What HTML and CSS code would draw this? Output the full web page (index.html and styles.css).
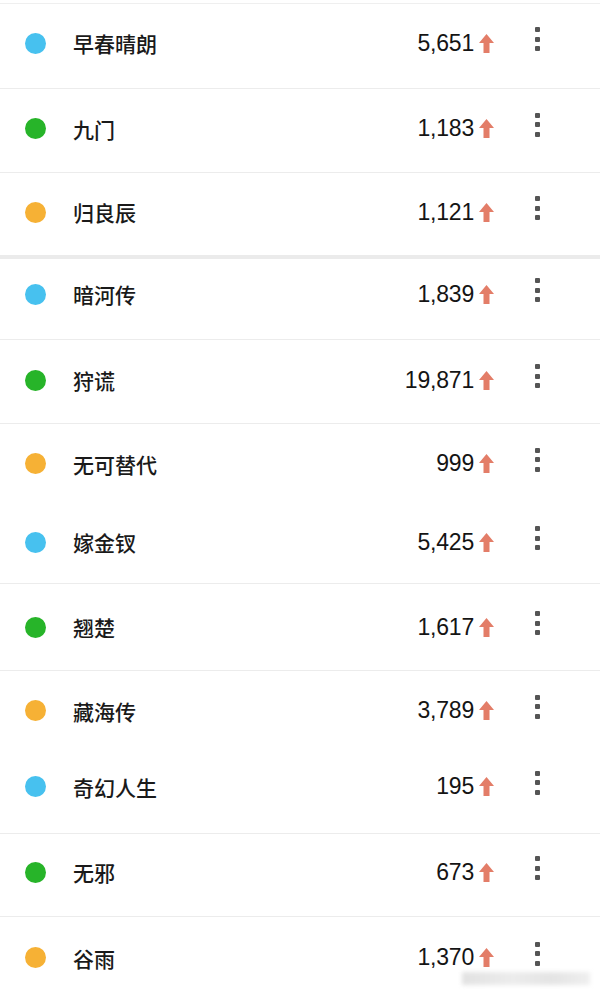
FILE: index.html
```html
<!DOCTYPE html>
<html lang="zh-CN">
<head>
    <meta charset="UTF-8">
    <meta name="viewport" content="width=device-width, initial-scale=1.0">
    <title>热度榜</title>
    <link rel="stylesheet" href="styles.css">
</head>
<body>
    <div class="list">
        <div class="row r1">
            <span class="dot blue"></span>
            <span class="name">早春晴朗</span>
            <span class="value">5,651</span>
            <svg class="arrow" viewBox="0 0 15 19"><polygon points="7.5,0 15,9 10.5,9 10.5,19 4.5,19 4.5,9 0,9"/></svg>
            <span class="more"><i></i><i></i><i></i></span>
        </div>
        <div class="row r2">
            <span class="dot green"></span>
            <span class="name">九门</span>
            <span class="value">1,183</span>
            <svg class="arrow" viewBox="0 0 15 19"><polygon points="7.5,0 15,9 10.5,9 10.5,19 4.5,19 4.5,9 0,9"/></svg>
            <span class="more"><i></i><i></i><i></i></span>
        </div>
        <div class="row r3 thick">
            <span class="dot orange"></span>
            <span class="name">归良辰</span>
            <span class="value">1,121</span>
            <svg class="arrow" viewBox="0 0 15 19"><polygon points="7.5,0 15,9 10.5,9 10.5,19 4.5,19 4.5,9 0,9"/></svg>
            <span class="more"><i></i><i></i><i></i></span>
        </div>
        <div class="row r4">
            <span class="dot blue"></span>
            <span class="name">暗河传</span>
            <span class="value">1,839</span>
            <svg class="arrow" viewBox="0 0 15 19"><polygon points="7.5,0 15,9 10.5,9 10.5,19 4.5,19 4.5,9 0,9"/></svg>
            <span class="more"><i></i><i></i><i></i></span>
        </div>
        <div class="row r5">
            <span class="dot green"></span>
            <span class="name">狩谎</span>
            <span class="value">19,871</span>
            <svg class="arrow" viewBox="0 0 15 19"><polygon points="7.5,0 15,9 10.5,9 10.5,19 4.5,19 4.5,9 0,9"/></svg>
            <span class="more"><i></i><i></i><i></i></span>
        </div>
        <div class="row r6 plain">
            <span class="dot orange"></span>
            <span class="name">无可替代</span>
            <span class="value">999</span>
            <svg class="arrow" viewBox="0 0 15 19"><polygon points="7.5,0 15,9 10.5,9 10.5,19 4.5,19 4.5,9 0,9"/></svg>
            <span class="more"><i></i><i></i><i></i></span>
        </div>
        <div class="row r7">
            <span class="dot blue"></span>
            <span class="name">嫁金钗</span>
            <span class="value">5,425</span>
            <svg class="arrow" viewBox="0 0 15 19"><polygon points="7.5,0 15,9 10.5,9 10.5,19 4.5,19 4.5,9 0,9"/></svg>
            <span class="more"><i></i><i></i><i></i></span>
        </div>
        <div class="row r8">
            <span class="dot green"></span>
            <span class="name">翘楚</span>
            <span class="value">1,617</span>
            <svg class="arrow" viewBox="0 0 15 19"><polygon points="7.5,0 15,9 10.5,9 10.5,19 4.5,19 4.5,9 0,9"/></svg>
            <span class="more"><i></i><i></i><i></i></span>
        </div>
        <div class="row r9 plain">
            <span class="dot orange"></span>
            <span class="name">藏海传</span>
            <span class="value">3,789</span>
            <svg class="arrow" viewBox="0 0 15 19"><polygon points="7.5,0 15,9 10.5,9 10.5,19 4.5,19 4.5,9 0,9"/></svg>
            <span class="more"><i></i><i></i><i></i></span>
        </div>
        <div class="row r10">
            <span class="dot blue"></span>
            <span class="name">奇幻人生</span>
            <span class="value">195</span>
            <svg class="arrow" viewBox="0 0 15 19"><polygon points="7.5,0 15,9 10.5,9 10.5,19 4.5,19 4.5,9 0,9"/></svg>
            <span class="more"><i></i><i></i><i></i></span>
        </div>
        <div class="row r11">
            <span class="dot green"></span>
            <span class="name">无邪</span>
            <span class="value">673</span>
            <svg class="arrow" viewBox="0 0 15 19"><polygon points="7.5,0 15,9 10.5,9 10.5,19 4.5,19 4.5,9 0,9"/></svg>
            <span class="more"><i></i><i></i><i></i></span>
        </div>
        <div class="row r12 plain">
            <span class="dot orange"></span>
            <span class="name">谷雨</span>
            <span class="value">1,370</span>
            <svg class="arrow" viewBox="0 0 15 19"><polygon points="7.5,0 15,9 10.5,9 10.5,19 4.5,19 4.5,9 0,9"/></svg>
            <span class="more"><i></i><i></i><i></i></span>
        </div>
    </div>
    <div class="watermark"></div>
</body>
</html>
```

FILE: styles.css
```css
html, body {
    margin: 0;
    padding: 0;
    background: #fff;
    overflow: hidden;
}
body {
    width: 600px;
    height: 992px;
    position: relative;
    font-family: "Liberation Sans", "Noto Sans CJK SC", sans-serif;
    color: #1e1e1e;
}
.list {
    margin-top: 3px;
    border-top: 1px solid #efefef;
}
.row {
    display: flex;
    align-items: center;
    padding: 0 60px 0 25px;
    border-bottom: 1px solid #ececec;
    box-sizing: content-box;
}
.row.plain {
    border-bottom: none;
}
.row.thick {
    border-bottom: 4px solid #ebebeb;
}
/* the rows were cut from a long screenshot, so heights differ a little */
.r1 { height: 78px; padding-bottom: 6px; }
.r2 { height: 79px; padding-bottom: 4px; }
.r3 { height: 78px; padding-bottom: 4px; }
.r4 { height: 70px; padding-bottom: 10px; }
.r5 { height: 80px; padding-bottom: 3px; }
.r6 { height: 79px; }
.r7 { height: 78px; padding-bottom: 2px; }
.r8 { height: 86px; }
.r9 { height: 79px; }
.r10 { height: 73px; padding-bottom: 10px; }
.r11 { height: 76px; padding-bottom: 6px; }
.r12 { height: 81px; padding-bottom: 2px; }
.dot {
    width: 21px;
    height: 21px;
    border-radius: 50%;
    flex: none;
}
.dot.blue { background: #47c1ef; }
.dot.green { background: #27b429; }
.dot.orange { background: #f6b135; }
.name {
    flex: 1;
    margin-left: 27px;
    font-family: "Noto Sans CJK SC", sans-serif;
    font-size: 21px;
    font-weight: 500;
    color: #1a1a1a;
}
.value {
    font-size: 23px;
    letter-spacing: -0.2px;
    color: #141414;
}
.arrow {
    width: 15px;
    height: 19px;
    margin-left: 5px;
    fill: #e37d68;
    flex: none;
}
.more {
    display: flex;
    flex-direction: column;
    gap: 4.5px;
    margin-left: 41px;
    margin-bottom: 8px;
}
.more i {
    display: block;
    width: 5px;
    height: 5px;
    background: #555;
    border-radius: 1px;
}
.watermark {
    position: absolute;
    left: 462px;
    top: 972px;
    width: 128px;
    height: 13px;
    background: linear-gradient(90deg, #e2e2e2, #ececec 40%, #e4e4e4 70%, #efefef);
    filter: blur(2px);
}
```
